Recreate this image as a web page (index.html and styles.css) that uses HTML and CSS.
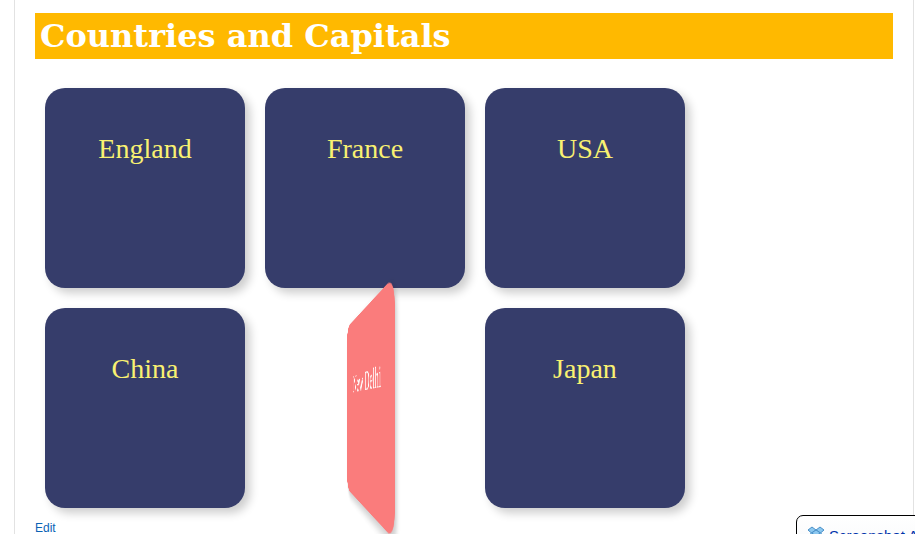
FILE: index.html
```html
<!DOCTYPE html>
<html lang="en">
<head>
<meta charset="utf-8">
<title>Countries and Capitals</title>
<link rel="stylesheet" href="styles.css">
</head>
<body>
<main class="page">
  <h1 class="banner">Countries and Capitals</h1>
  <section class="cards">
    <div class="slot"><div class="card">England</div></div>
    <div class="slot"><div class="card">France</div></div>
    <div class="slot"><div class="card">USA</div></div>
    <div class="slot"><div class="card">China</div></div>
    <div class="slot"><div class="card card-turning">New Delhi</div></div>
    <div class="slot"><div class="card">Japan</div></div>
  </section>
  <a class="edit" href="#">Edit</a>
</main>
<aside class="toast">
  <svg class="toast-icon" width="18" height="16" viewBox="0 0 18 16" aria-hidden="true">
    <g fill="#8cc8f0" stroke="#4a90c8" stroke-width="1" stroke-linejoin="round">
      <path d="M5 1 9 4 4.500 7 1 4z"/>
      <path d="M13 1 17 4 13.500 7 9 4z"/>
      <path d="M4.500 7 9 4 13.500 7 9 10z"/>
      <path d="M4.500 7 9 10 5 13 1 10z"/>
      <path d="M13.500 7 17 10 13 13 9 10z"/>
    </g>
  </svg>
  <span class="toast-title">Screenshot Added</span>
</aside>
</body>
</html>
```

FILE: styles.css
```css
* {
  box-sizing: border-box;
}

body {
  margin: 0;
  height: 100vh;
  overflow: hidden;
  position: relative;
  background: #fff;
  font-family: "Liberation Sans", Arial, sans-serif;
}

.page {
  min-height: 100vh;
  margin: 0 1px 0 14px;
  padding: 13px 20px;
  border: solid #e2e2e2;
  border-width: 0 1px;
}

.banner {
  margin: 0 0 19px;
  padding: 0 5px;
  background: #ffb900;
  color: #fff;
  font: bold 32px/46px Rockwell, "DejaVu Serif", serif;
}

.cards {
  display: grid;
  grid-template-columns: repeat(3, 220px);
}

.slot {
  padding: 10px;
  perspective: 400px;
}

.card {
  height: 200px;
  padding-top: 45px;
  border-radius: 20px;
  background: #363d6b;
  box-shadow: 5px 5px 10px rgba(0, 0, 0, 0.2);
  color: #f9f171;
  font: 28px/32px "Liberation Serif", "Times New Roman", serif;
  text-align: center;
}

/* Caught halfway through its flip */
.card-turning {
  padding-top: 57px;
  background: #fa7c7c;
  color: #fff;
  transform: rotateY(-77deg);
}

.edit {
  display: block;
  width: max-content;
  color: #0b63b5;
  font-size: 12px;
  line-height: 20px;
  text-decoration: none;
}

.toast {
  position: absolute;
  left: calc(100% - 119px);
  top: calc(100% - 19px);
  width: 240px;
  height: 80px;
  padding: 10px;
  display: flex;
  align-items: flex-start;
  gap: 4px;
  border: 1px solid #000;
  border-radius: 7px;
  background: linear-gradient(#fff, #f0f2f6);
}

.toast-title {
  color: #0033aa;
  font: 15px/20px "Liberation Sans", Arial, sans-serif;
  white-space: nowrap;
}
```
